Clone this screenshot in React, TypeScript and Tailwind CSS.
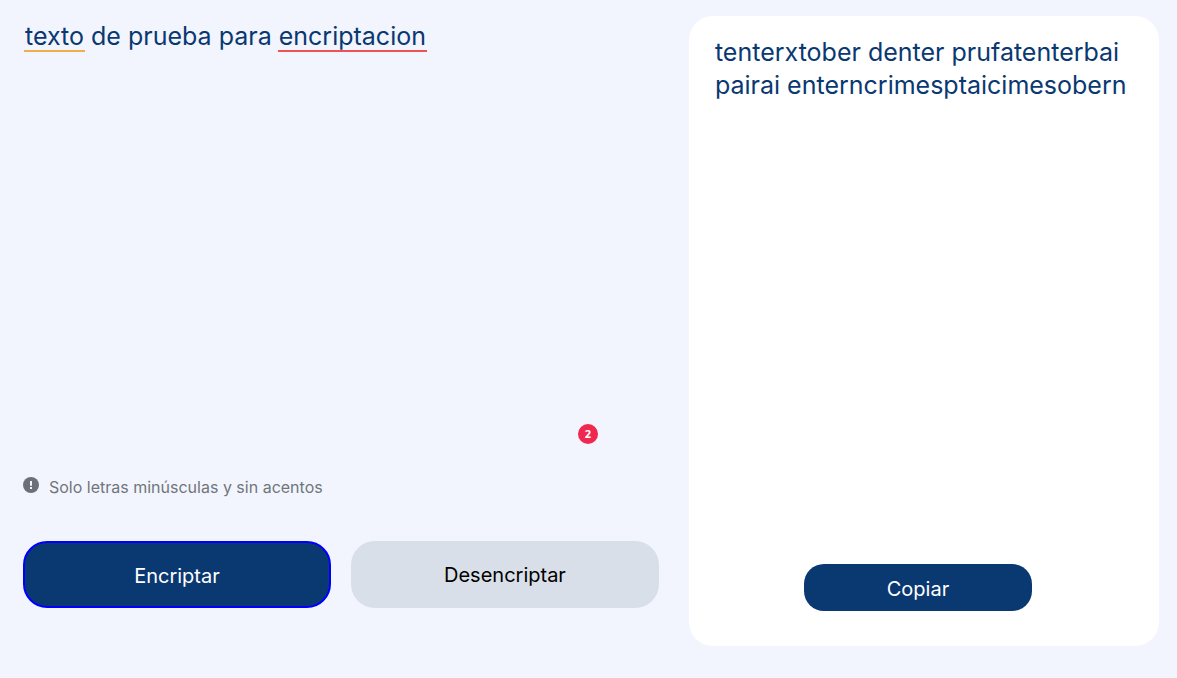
import React, { useState } from "react";

const KEYS: Record<string, string> = {
  e: "enter",
  i: "imes",
  a: "ai",
  o: "ober",
  u: "ufat",
};

const encrypt = (text: string) =>
  text.replace(/[eiaou]/g, (letter) => KEYS[letter]);

const decrypt = (text: string) =>
  text.replace(/enter|imes|ai|ober|ufat/g, (code) => code[0]);

const INITIAL_TEXT = "texto de prueba para encriptacion";

const App: React.FC = () => {
  const [text, setText] = useState(INITIAL_TEXT);
  const [result, setResult] = useState(encrypt(INITIAL_TEXT));

  return (
    <div className="min-h-screen bg-[#f2f5fd] pl-[23px] pr-[18px] pt-4 pb-8 font-['Inter',sans-serif]">
      <main className="grid grid-cols-[23fr_17fr] gap-[30px]">
        <section className="flex flex-col">
          <div className="relative w-11/12">
            <textarea
              aria-label="Ingrese el texto aquí"
              spellCheck={false}
              className="block w-full h-[436px] pl-0.5 pt-1 resize-none bg-transparent text-[25px] leading-[33px] text-[#0a3871] outline-none"
              value={text}
              onChange={(e) => setText(e.target.value)}
            />
            {text === INITIAL_TEXT && (
              <>
                <span className="absolute left-px top-[34px] w-[61px] h-0.5 bg-[#f0ad4e] pointer-events-none" />
                <span className="absolute left-[255px] top-[34px] w-[149px] h-0.5 bg-[#ee5253] pointer-events-none" />
                <span className="absolute right-2 bottom-2 flex items-center justify-center size-5 rounded-full bg-[#f0284f] font-['Open_Sans',sans-serif] text-[11px] font-bold text-white">
                  2
                </span>
              </>
            )}
          </div>
          <p className="flex mt-6 gap-2.5 text-base leading-[22px] text-[#71757c]">
            <svg className="size-4 mt-px" viewBox="0 0 16 16" aria-hidden="true">
              <circle cx="8" cy="8" r="8" fill="#6b7078" />
              <path d="M7 4h2v4.8H7zM7 10h2v2H7z" fill="#f2f5fd" />
            </svg>
            Solo letras minúsculas y sin acentos
          </p>
          <div className="grid grid-cols-2 mt-[43px] gap-5">
            <button
              type="button"
              className="h-[67px] pt-0.5 rounded-3xl border-2 border-[#0000ff] bg-[#0a3871] text-xl text-white"
              onClick={() => setResult(encrypt(text))}
            >
              Encriptar
            </button>
            <button
              type="button"
              className="h-[67px] rounded-3xl bg-[#d8dfe8] text-xl text-black"
              onClick={() => setResult(decrypt(text))}
            >
              Desencriptar
            </button>
          </div>
        </section>
        <section className="flex flex-col min-h-[630px] rounded-3xl bg-white pl-[26px] pr-[38px] pt-5 pb-[35px]">
          <output className="flex-1 -mr-4 break-words text-[25px] leading-[33px] text-[#0a3871]">
            {result}
          </output>
          <button
            type="button"
            className="self-center w-[228px] h-[47px] pt-0.5 rounded-[20px] bg-[#0a3871] text-xl text-white"
            onClick={() => navigator.clipboard.writeText(result)}
          >
            Copiar
          </button>
        </section>
      </main>
    </div>
  );
};

export default App;
